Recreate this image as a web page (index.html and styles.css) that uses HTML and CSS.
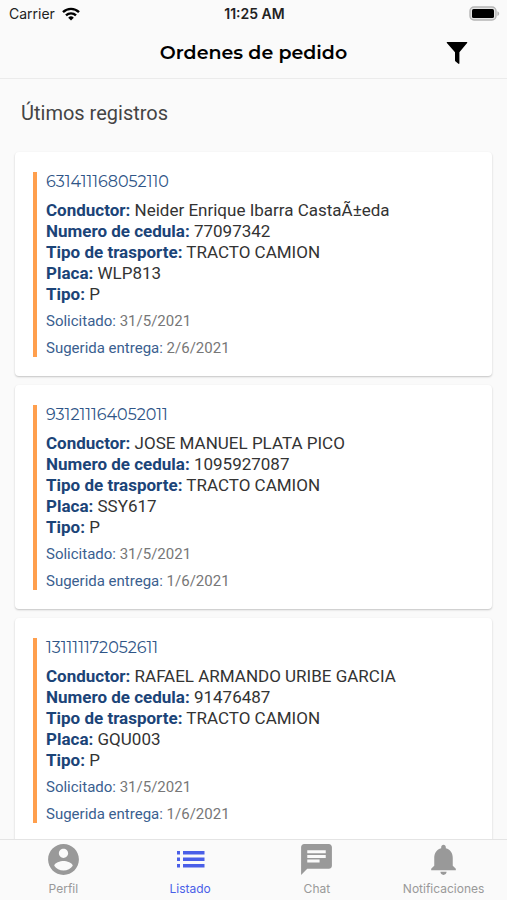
FILE: index.html
```html
<!DOCTYPE html>
<html lang="es">

<head>
    <meta charset="UTF-8">
    <meta name="viewport" content="width=device-width, initial-scale=1.0">
    <title>Ordenes de pedido</title>
    <link rel="stylesheet" href="styles.css">
</head>

<body>
    <div class="status-bar">
        <div class="carrier">
            <span>Carrier</span>
            <svg width="18" height="14" viewBox="0 0 18 14" fill="none" stroke="#000" stroke-width="2.4">
                <path d="M1 5.2a11.4 11.4 0 0 1 16 0" />
                <path d="M4 8.4a7.2 7.2 0 0 1 10 0" />
                <path d="M9 13.6L6.2 10.7a4 4 0 0 1 5.6 0z" fill="#000" stroke="none" />
            </svg>
        </div>
        <span class="clock">11:25 AM</span>
        <svg class="battery" width="31" height="15" viewBox="0 0 31 15">
            <rect x="1" y="1" width="26" height="13" rx="4" fill="#e4e4e4" stroke="#b5b5b5" stroke-width="1.4" />
            <rect x="3" y="3" width="22" height="9" rx="1.6" fill="#000" />
            <path d="M28.4 5.2c2.4 1 2.4 3.8 0 4.8z" fill="#b5b5b5" />
        </svg>
    </div>

    <header class="header">
        <h1>Ordenes de pedido</h1>
        <button class="filter" type="button" aria-label="Filtrar">
            <svg width="22" height="24" viewBox="0 0 22 24">
                <path d="M1.200 1h19.600c.5 0 .6.5.3.900L13.400 11.200v11.100c0 .6-.5.8-1 .5l-2.800-2.200c-.4-.3-.6-.6-.6-1v-8.400L.9 1.900C.6 1.500.7 1 1.200 1z" />
            </svg>
        </button>
    </header>

    <main class="content">
        <h2>Útimos registros</h2>

        <article class="card">
            <div class="order">
                <h3>631411168052110</h3>
                <ul class="details">
                    <li><b>Conductor:</b> Neider Enrique Ibarra CastaÃ±eda</li>
                    <li><b>Numero de cedula:</b> 77097342</li>
                    <li><b>Tipo de trasporte:</b> TRACTO CAMION</li>
                    <li><b>Placa:</b> WLP813</li>
                    <li><b>Tipo:</b> P</li>
                </ul>
                <p class="date"><span>Solicitado:</span> 31/5/2021</p>
                <p class="date"><span>Sugerida entrega:</span> 2/6/2021</p>
            </div>
        </article>

        <article class="card">
            <div class="order">
                <h3>931211164052011</h3>
                <ul class="details">
                    <li><b>Conductor:</b> JOSE MANUEL PLATA PICO</li>
                    <li><b>Numero de cedula:</b> 1095927087</li>
                    <li><b>Tipo de trasporte:</b> TRACTO CAMION</li>
                    <li><b>Placa:</b> SSY617</li>
                    <li><b>Tipo:</b> P</li>
                </ul>
                <p class="date"><span>Solicitado:</span> 31/5/2021</p>
                <p class="date"><span>Sugerida entrega:</span> 1/6/2021</p>
            </div>
        </article>

        <article class="card">
            <div class="order">
                <h3>131111172052611</h3>
                <ul class="details">
                    <li><b>Conductor:</b> RAFAEL ARMANDO URIBE GARCIA</li>
                    <li><b>Numero de cedula:</b> 91476487</li>
                    <li><b>Tipo de trasporte:</b> TRACTO CAMION</li>
                    <li><b>Placa:</b> GQU003</li>
                    <li><b>Tipo:</b> P</li>
                </ul>
                <p class="date"><span>Solicitado:</span> 31/5/2021</p>
                <p class="date"><span>Sugerida entrega:</span> 1/6/2021</p>
            </div>
        </article>
    </main>

    <nav class="tabs">
        <a class="tab" href="#perfil">
            <svg width="37" height="37" viewBox="0 0 24 24">
                <path d="M12 2C6.48 2 2 6.48 2 12s4.48 10 10 10 10-4.480 10-10S17.520 2 12 2zm0 3c1.660 0 3 1.340 3 3s-1.340 3-3 3-3-1.340-3-3 1.340-3 3-3zm0 14.200c-2.500 0-4.710-1.280-6-3.220.03-1.990 4-3.080 6-3.080 1.990 0 5.970 1.090 6 3.080-1.290 1.940-3.500 3.220-6 3.220z" />
            </svg>
            <span>Perfil</span>
        </a>
        <a class="tab active" href="#listado">
            <svg width="37" height="37" viewBox="0 0 37 37">
                <path d="M5 10h3v3.500H5zM11 10h21.500v3.500H11zM5 16.500h3V20H5zM11 16.500h21.500V20H11zM5 23h3v3.500H5zM11 23h21.500v3.500H11z" />
            </svg>
            <span>Listado</span>
        </a>
        <a class="tab" href="#chat">
            <svg width="37" height="37" viewBox="0 0 24 24">
                <path d="M20 2H4c-1.100 0-1.990.9-1.990 2L2 22l4-4h14c1.100 0 2-.9 2-2V4c0-1.100-.9-2-2-2zM6 9h12v2H6V9zm8 5H6v-2h8v2zm4-6H6V6h12v2z" />
            </svg>
            <span>Chat</span>
        </a>
        <a class="tab" href="#notificaciones">
            <svg width="37" height="37" viewBox="0 0 24 24">
                <path d="M12 22c1.100 0 2-.9 2-2h-4c0 1.100.89 2 2 2zm6-6v-5c0-3.070-1.640-5.640-4.500-6.320V4c0-.83-.67-1.500-1.500-1.500s-1.500.67-1.500 1.500v.68C7.630 5.360 6 7.920 6 11v5l-2 2v1h16v-1l-2-2z" />
            </svg>
            <span>Notificaciones</span>
        </a>
    </nav>
</body>

</html>
```

FILE: styles.css
```css
* {
    box-sizing: border-box;
}

body {
    display: flex;
    flex-direction: column;
    height: 100vh;
    margin: 0;
    font-family: Roboto, Arial, sans-serif;
    color: #333;
    background-color: #fafafa;
}

h1,
h2,
h3,
p,
ul {
    margin: 0;
    padding: 0;
}

.status-bar {
    display: grid;
    grid-template-columns: 1fr auto 1fr;
    align-items: center;
    height: 27px;
    padding: 0 7px 0 9px;
    font-family: Inter, sans-serif;
    font-size: 14px;
    color: #222;
}

.carrier {
    display: flex;
    align-items: center;
    gap: 7px;
}

.clock {
    font-weight: 600;
}

.battery {
    justify-self: end;
}

.header {
    display: grid;
    grid-template-columns: 1fr auto 1fr;
    align-items: center;
    height: 52px;
    padding: 0 39px;
    border-bottom: 1px solid #ebebeb;
}

.header h1 {
    grid-column: 2;
    font-family: Montserrat, Inter, sans-serif;
    font-size: 19px;
    font-weight: 600;
    color: #000;
}

.filter {
    display: flex;
    justify-self: end;
    padding: 0;
    border: none;
    background: none;
    cursor: pointer;
}

.content {
    flex: 1;
    min-height: 0;
    padding: 0 15px;
    overflow-y: auto;
    scrollbar-width: none;
}

.content h2 {
    padding: 22px 6px 27px;
    font-size: 20px;
    font-weight: 400;
    line-height: 24px;
    color: #444;
}

.card {
    margin-bottom: 9px;
    padding: 20px 18px 19px;
    background-color: #fff;
    border-radius: 4px;
    box-shadow: 0 1px 2px rgba(0, 0, 0, 0.22);
}

.order {
    padding-left: 9px;
    border-left: 4px solid #ff9f4d;
}

.order h3 {
    font-family: Montserrat, Inter, sans-serif;
    font-size: 16px;
    font-weight: 400;
    line-height: 20px;
    color: #2f5587;
}

.details {
    margin: 8px 0 7px;
    list-style: none;
    font-size: 17px;
    line-height: 21px;
}

.details b {
    color: #1b4478;
}

.date {
    font-size: 15px;
    line-height: 18px;
    color: #777;
}

.date + .date {
    margin-top: 9px;
}

.date span {
    color: #3a608f;
}

.tabs {
    display: grid;
    grid-template-columns: repeat(4, 1fr);
    height: 61px;
    border-top: 1px solid #e4e4e4;
    background-color: #fafafa;
}

.tab {
    display: flex;
    flex-direction: column;
    align-items: center;
    padding-top: 1px;
    font-family: Inter, sans-serif;
    font-size: 12px;
    line-height: 21px;
    color: #999;
    text-decoration: none;
}

.tab svg {
    fill: currentColor;
}

.tab.active {
    color: #4a5fe8;
}
```
